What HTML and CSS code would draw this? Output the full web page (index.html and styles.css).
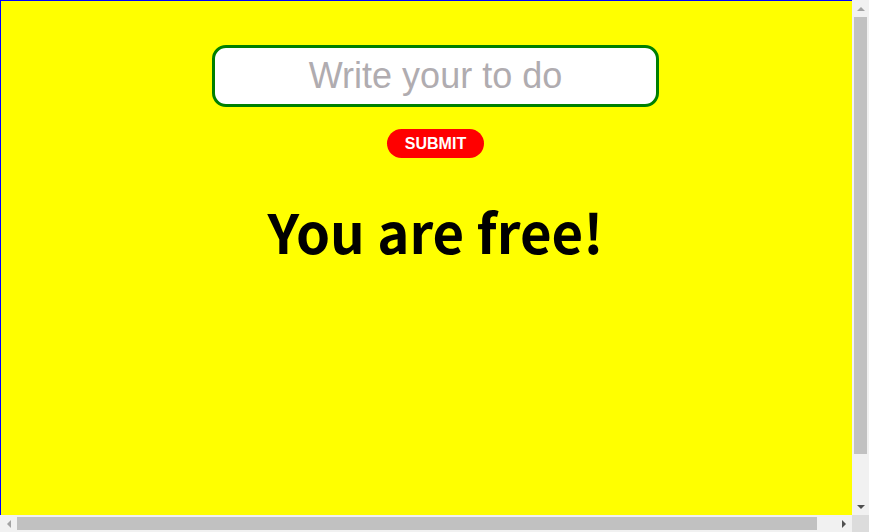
FILE: index.html
```html
<!DOCTYPE html>
<html lang="en">
<head>
<meta charset="utf-8">
<title>To do</title>
<link rel="stylesheet" href="styles.css">
</head>
<body>
<div class="app">
  <form class="todo-form">
    <input class="todo-input" type="text" placeholder="Write your to do">
    <button class="submit-btn" type="button">SUBMIT</button>
  </form>
  <h1 class="status">You are free!</h1>
</div>
<div class="sb sb-v" aria-hidden="true">
  <span class="sb-btn"><i class="arrow arrow-up"></i></span>
  <span class="sb-track"><span class="sb-thumb"></span></span>
  <span class="sb-btn"><i class="arrow arrow-down"></i></span>
</div>
<div class="sb sb-h" aria-hidden="true">
  <span class="sb-btn"><i class="arrow arrow-left"></i></span>
  <span class="sb-track"><span class="sb-thumb"></span></span>
  <span class="sb-btn"><i class="arrow arrow-right"></i></span>
</div>
<div class="sb-corner" aria-hidden="true"></div>
</body>
</html>
```
FILE: styles.css
```css
html, body {
  margin: 0;
  padding: 0;
}
body {
  background: #ffff00;
}
.app {
  width: 100vw;
  min-height: 520px;
  border: 1px solid #0000ff;
  background: #ffff00;
  display: flex;
  flex-direction: column;
  align-items: center;
  padding-top: 44px;
  box-sizing: content-box;
  font-family: "Liberation Sans", Arial, sans-serif;
}
.todo-form {
  display: flex;
  flex-direction: column;
  align-items: center;
  gap: 22px;
}
.todo-input {
  width: 447px;
  height: 62px;
  box-sizing: border-box;
  border: 3px solid #008000;
  border-radius: 14px;
  background: #fff;
  font-family: "Liberation Sans", Arial, sans-serif;
  font-size: 36px;
  text-align: center;
  outline: none;
  padding: 0 10px;
}
.todo-input::placeholder {
  color: #b0acb0;
}
.submit-btn {
  height: 29px;
  padding: 0 18px;
  border: none;
  border-radius: 15px;
  background: #ff0000;
  color: #fff;
  font-family: "Liberation Sans", Arial, sans-serif;
  font-weight: bold;
  font-size: 16px;
  cursor: pointer;
}
.status {
  margin: 40px 0 0;
  font-family: "Noto Sans CJK KR", "Noto Sans", sans-serif;
  font-weight: bold;
  font-size: 54.5px;
  line-height: 1.2;
  color: #000;
}

/* browser-style scrollbars drawn over the page */
.sb {
  position: fixed;
  display: flex;
  background: #f1f1f1;
  z-index: 10;
}
.sb-v {
  top: 0;
  right: 0;
  bottom: 17px;
  width: 17px;
  flex-direction: column;
}
.sb-h {
  left: 0;
  right: 17px;
  bottom: 0;
  height: 17px;
  flex-direction: row;
}
.sb-btn {
  flex: 0 0 17px;
  width: 17px;
  height: 17px;
  display: flex;
  align-items: center;
  justify-content: center;
}
.sb-track {
  flex: 1;
  display: flex;
}
.sb-v .sb-track {
  flex-direction: column;
  padding: 0 2px;
}
.sb-h .sb-track {
  flex-direction: row;
  padding: 2px 0;
}
.sb-thumb {
  background: #c1c1c1;
}
.sb-v .sb-thumb {
  height: 437px;
}
.sb-h .sb-thumb {
  width: 800px;
}
.sb-corner {
  position: fixed;
  right: 0;
  bottom: 0;
  width: 17px;
  height: 17px;
  background: #dcdcdc;
  z-index: 10;
}
.arrow {
  width: 0;
  height: 0;
  display: block;
}
.arrow-up {
  border-left: 4px solid transparent;
  border-right: 4px solid transparent;
  border-bottom: 4px solid #a3a3a3;
}
.arrow-down {
  border-left: 4px solid transparent;
  border-right: 4px solid transparent;
  border-top: 4px solid #505050;
}
.arrow-left {
  border-top: 4px solid transparent;
  border-bottom: 4px solid transparent;
  border-right: 4px solid #a3a3a3;
}
.arrow-right {
  border-top: 4px solid transparent;
  border-bottom: 4px solid transparent;
  border-left: 4px solid #505050;
}
```
